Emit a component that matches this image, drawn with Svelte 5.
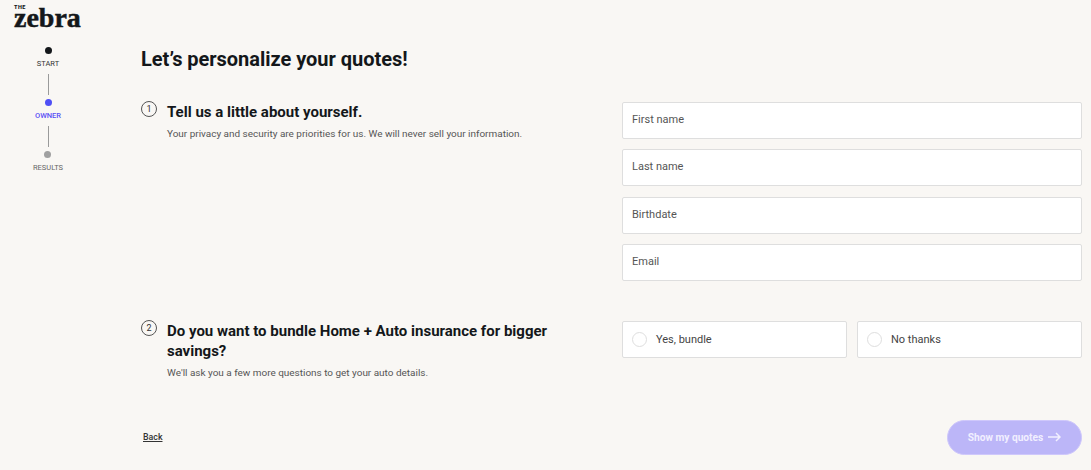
<script>
  const steps = [
    { label: "START", state: "done" },
    { label: "OWNER", state: "active" },
    { label: "RESULTS", state: "todo" }
  ];
  const fields = ["First name", "Last name", "Birthdate", "Email"];
  const bundleOptions = ["Yes, bundle", "No thanks"];
</script>

<div class="page">
  <header class="logo">
    <span class="logo-the">THE</span>
    <span class="logo-name">zebra</span>
  </header>

  <div class="body">
    <nav class="steps">
      {#each steps as step, i}
        {#if i > 0}
          <div class="line"></div>
        {/if}
        <div class="step {step.state}">
          <span class="dot"></span>
          <span class="label">{step.label}</span>
        </div>
      {/each}
    </nav>

    <main class="content">
      <h1>Let’s personalize your quotes!</h1>

      <section class="row first">
        <div class="question">
          <span class="num">1</span>
          <div>
            <h2>Tell us a little about yourself.</h2>
            <p>Your privacy and security are priorities for us. We will never sell your information.</p>
          </div>
        </div>
        <div class="fields">
          {#each fields as field}
            <input type="text" placeholder={field} />
          {/each}
        </div>
      </section>

      <section class="row second">
        <div class="question">
          <span class="num">2</span>
          <div>
            <h2>Do you want to bundle Home + Auto insurance for bigger savings?</h2>
            <p>We'll ask you a few more questions to get your auto details.</p>
          </div>
        </div>
        <div class="options">
          {#each bundleOptions as option}
            <label class="option">
              <input type="radio" name="bundle" />
              <span class="circle"></span>
              <span>{option}</span>
            </label>
          {/each}
        </div>
      </section>

      <footer class="actions">
        <a class="back" href="#back">Back</a>
        <button class="submit" type="button" disabled>
          <span>Show my quotes</span>
          <svg width="13" height="10" viewBox="0 0 13 10" fill="none" stroke="currentColor" stroke-width="1.5">
            <path d="M0 5h12M8 1l4 4-4 4" />
          </svg>
        </button>
      </footer>
    </main>
  </div>
</div>

<style>
  :global(body) {
    margin: 0;
    background: #f9f7f4;
    font-family: Roboto, "Liberation Sans", sans-serif;
    color: #111;
  }
  .page {
    height: 470px;
    overflow: hidden;
  }
  .logo {
    display: flex;
    flex-direction: column;
    height: 40px;
    padding: 5px 0 0 14px;
    box-sizing: border-box;
    color: #14171a;
  }
  .logo-the {
    font-size: 5.5px;
    font-weight: 900;
    line-height: 5px;
    letter-spacing: 0.5px;
  }
  .logo-name {
    font-family: "Liberation Serif", serif;
    font-size: 28px;
    font-weight: 700;
    line-height: 15px;
    -webkit-text-stroke: 0.5px #14171a;
  }
  .body {
    display: flex;
  }
  .steps {
    width: 96px;
    padding-top: 7px;
    display: flex;
    flex-direction: column;
    align-items: center;
    flex-shrink: 0;
  }
  .step {
    display: flex;
    flex-direction: column;
    align-items: center;
    gap: 5px;
  }
  .dot {
    width: 7px;
    height: 7px;
    border-radius: 50%;
    background: #14171a;
  }
  .label {
    font-size: 7.5px;
    line-height: 10px;
    color: #333;
  }
  .line {
    width: 1px;
    height: 21px;
    margin: 5px 0 4px;
    background: #9a9a9a;
  }
  .step.active .dot {
    background: #4f4ff5;
  }
  .step.active .label {
    color: #5a4ff5;
    font-weight: 500;
  }
  .step.todo .dot {
    background: #a0a0a0;
  }
  .step.todo .label {
    color: #666;
  }
  .content {
    margin-left: 45px;
    width: 941px;
  }
  h1 {
    margin: 0;
    font-size: 20px;
    font-weight: 700;
    line-height: 26px;
    letter-spacing: -0.03px;
    padding-top: 6px;
    color: #14171a;
  }
  .row {
    display: flex;
    justify-content: space-between;
  }
  .row.first {
    margin-top: 30px;
  }
  .row.second {
    margin-top: 40px;
  }
  .question {
    display: flex;
    gap: 10px;
    width: 410px;
  }
  .num {
    width: 14px;
    height: 14px;
    margin-top: -1px;
    border: 1px solid #555;
    border-radius: 50%;
    font-size: 9px;
    line-height: 14px;
    text-align: center;
    flex-shrink: 0;
    color: #333;
  }
  h2 {
    margin: 0;
    font-size: 15px;
    font-weight: 700;
    line-height: 20px;
    color: #14171a;
  }
  p {
    margin: 6px 0 0;
    font-size: 9.96px;
    line-height: 12px;
    color: #555;
  }
  .fields {
    width: 460px;
    display: flex;
    flex-direction: column;
    gap: 10.33px;
  }
  input[type="text"] {
    height: 37px;
    box-sizing: border-box;
    padding: 0 9px 2px;
    border: 1px solid #dedede;
    border-radius: 2px;
    background: #fff;
    font-family: inherit;
    font-size: 11px;
  }
  input[type="text"]::placeholder {
    color: #555;
    opacity: 1;
  }
  .options {
    width: 460px;
    display: flex;
    gap: 10px;
    align-self: flex-start;
  }
  .option {
    flex: 1;
    height: 37px;
    box-sizing: border-box;
    display: flex;
    align-items: center;
    gap: 9px;
    padding-left: 9px;
    border: 1px solid #dedede;
    border-radius: 2px;
    background: #fff;
    font-size: 11px;
    color: #444;
  }
  .option input {
    display: none;
  }
  .circle {
    width: 13px;
    height: 13px;
    border: 1px solid #dedede;
    border-radius: 50%;
  }
  .actions {
    display: flex;
    justify-content: space-between;
    align-items: center;
    margin-top: 41px;
  }
  .back {
    margin-left: 2px;
    font-size: 8.8px;
    font-weight: 500;
    color: #333;
  }
  .submit {
    width: 135px;
    height: 35px;
    display: flex;
    align-items: center;
    justify-content: center;
    gap: 5px;
    border: 1px solid #cfc8fb;
    border-radius: 18px;
    background: #bcb6f8;
    color: #f1efff;
    font-family: inherit;
    font-size: 10.2px;
    font-weight: 700;
  }
</style>
